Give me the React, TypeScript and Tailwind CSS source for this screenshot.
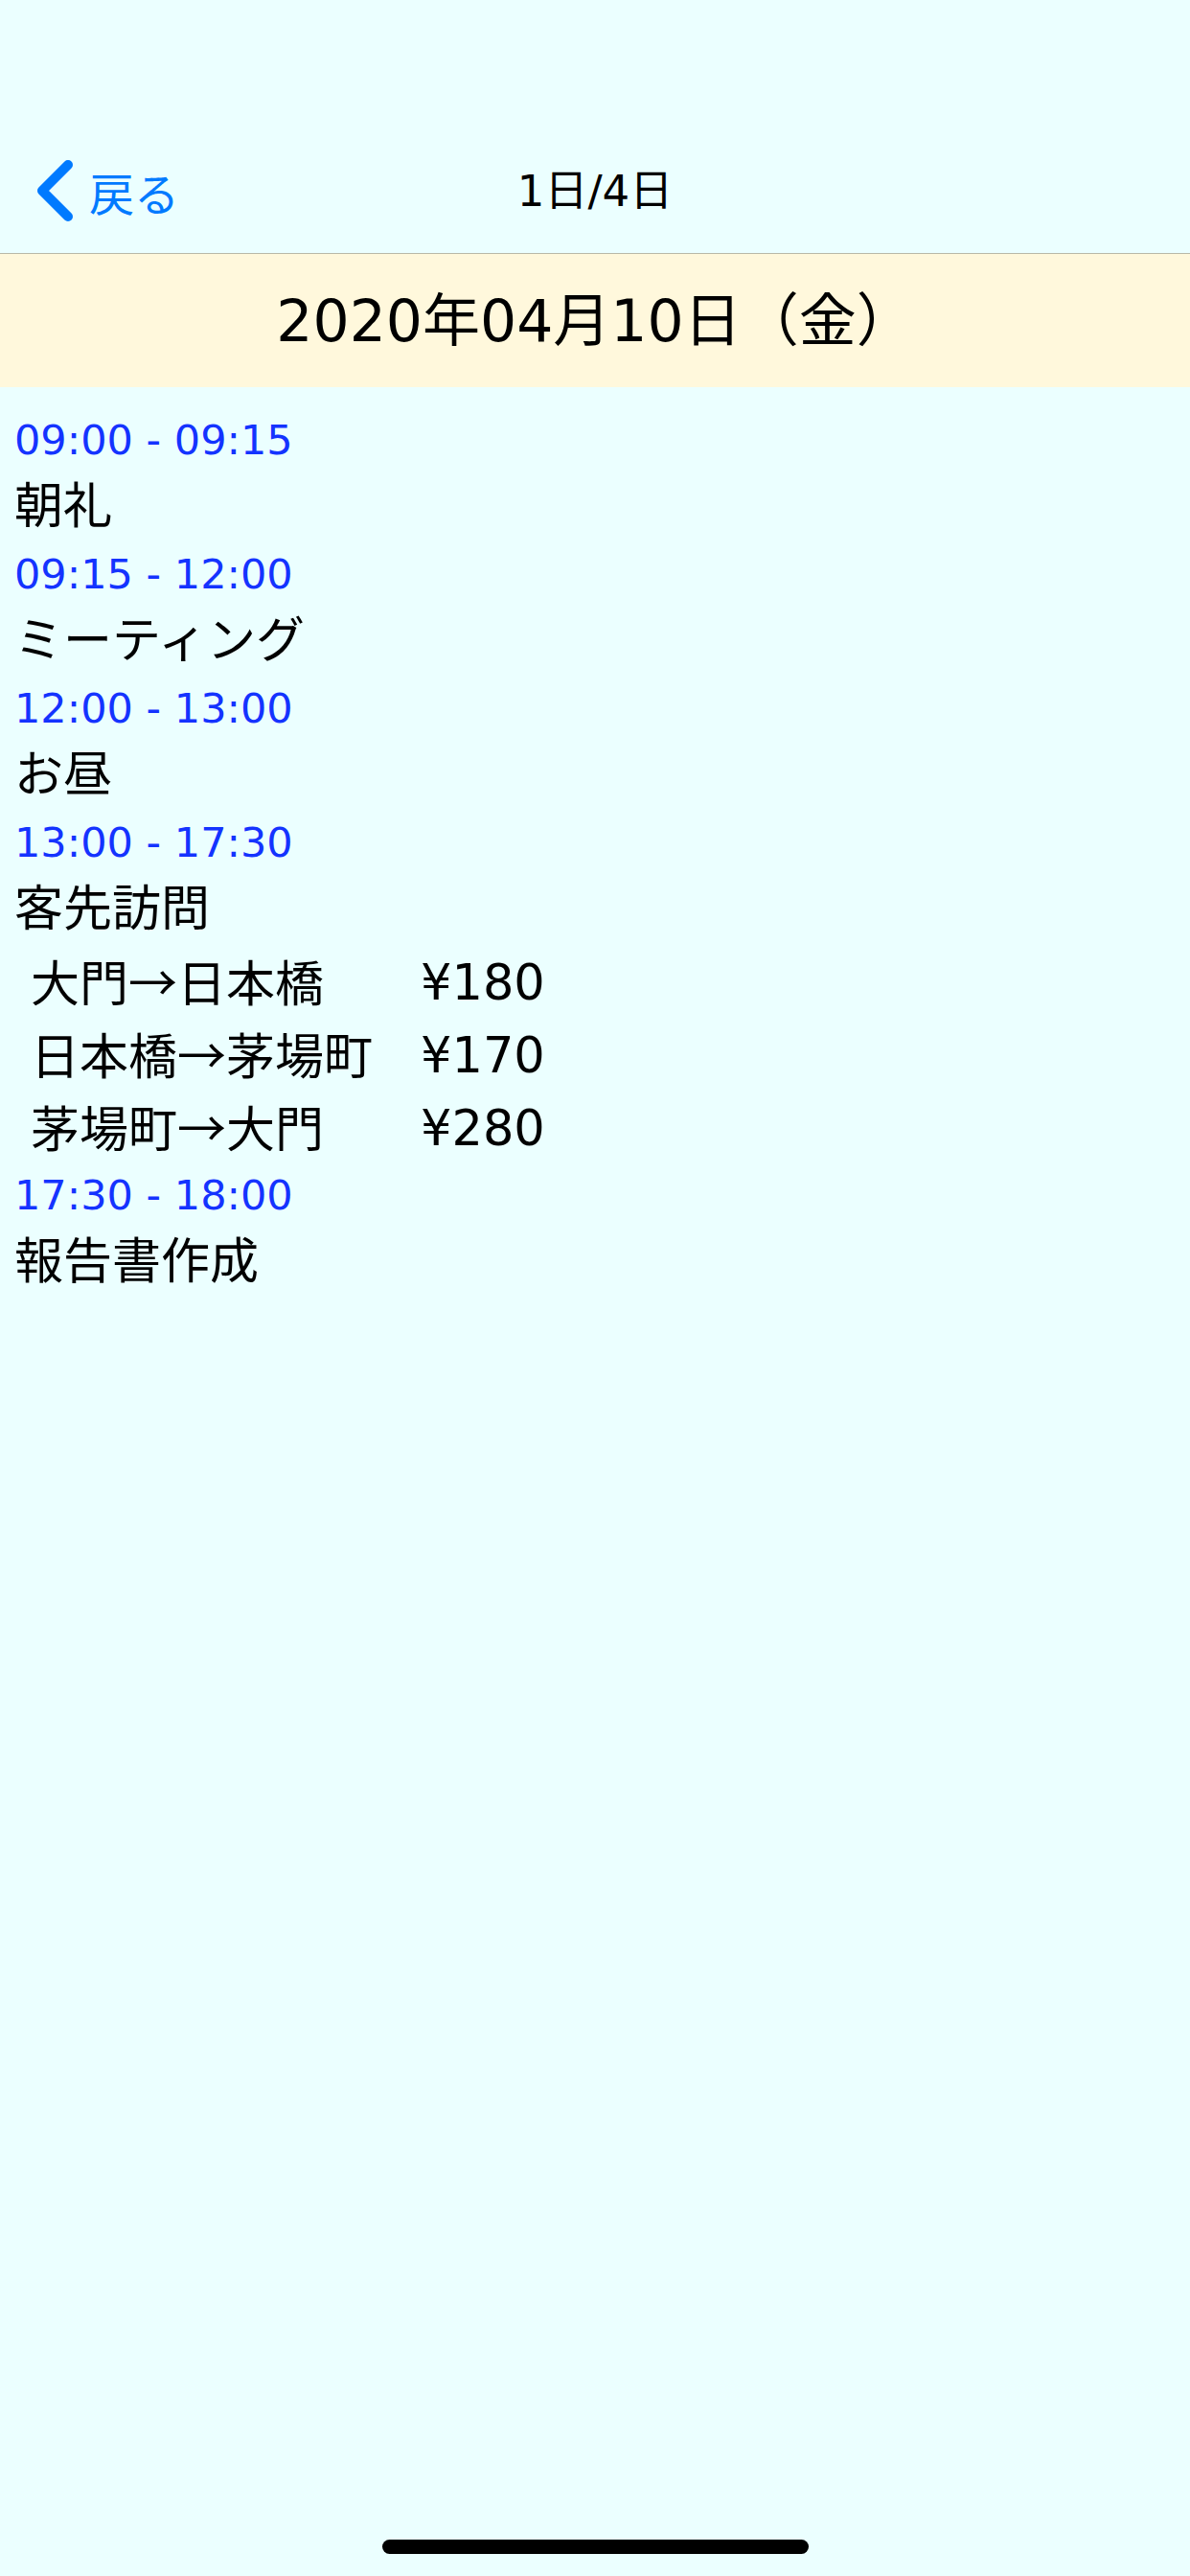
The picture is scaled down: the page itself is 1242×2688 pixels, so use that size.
const rows: { time: string; title: string; fares?: { route: [string, string]; price: string }[] }[] = [
  { time: "09:00 - 09:15", title: "朝礼" },
  { time: "09:15 - 12:00", title: "ミーティング" },
  { time: "12:00 - 13:00", title: "お昼" },
  {
    time: "13:00 - 17:30",
    title: "客先訪問",
    fares: [
      { route: ["大門", "日本橋"], price: "¥180" },
      { route: ["日本橋", "茅場町"], price: "¥170" },
      { route: ["茅場町", "大門"], price: "¥280" },
    ],
  },
  { time: "17:30 - 18:00", title: "報告書作成" },
];

const font = "font-['DejaVu_Sans','Noto_Sans_CJK_JP',sans-serif]";

export default function App() {
  return (
    <div className={`min-h-[2688px] bg-[#ebffff] flex flex-col ${font}`}>
      {/* Nav bar */}
      <header className="h-[264px] flex flex-col justify-end">
        <div className="h-[130px] grid grid-cols-3 items-center">
          <button type="button" className="flex items-center gap-[17px] pl-[38px] text-[#007aff]">
            <svg width="38" height="64" viewBox="0 0 38 64" fill="none">
              <path d="M33 5 L6 32 L33 59" stroke="#007aff" strokeWidth="10" strokeLinecap="round" strokeLinejoin="round" />
            </svg>
            <span className="text-[47px] leading-none font-['Noto_Sans_CJK_JP',sans-serif]">戻る</span>
          </button>
          <div className="text-center text-[45px] leading-none text-black">1日/4日</div>
          <div />
        </div>
      </header>

      {/* Date bar */}
      <div className="h-[140px] bg-[#fff8dc] border-t border-[#b8b8a8] flex items-center justify-center">
        <h1 className="text-[60px] leading-none text-black">2020年04月10日（金）</h1>
      </div>

      {/* Schedule */}
      <main className="px-[15px] pt-[21px] flex flex-col">
        {rows.map((r) => (
          <div key={r.time} className="flex flex-col">
            <div className="h-[68px] flex items-center text-[43px] text-[#1433ff]">{r.time}</div>
            <div className="h-[72px] flex items-center text-[51px] text-black">{r.title}</div>
            {r.fares?.map((f) => (
              <div key={f.price} className="h-[76px] grid grid-cols-[424px_auto] items-center text-[51px] text-black">
                <span className="pl-[17px]">
                  {f.route[0]}
                  <span className="font-['Noto_Sans_CJK_JP',sans-serif]">→</span>
                  {f.route[1]}
                </span>
                <span>{f.price}</span>
              </div>
            ))}
          </div>
        ))}
      </main>

      <div className="flex-1" />
      {/* Home indicator */}
      <div className="h-[38px] flex justify-center">
        <div className="w-[445px] h-[15px] rounded-full bg-black" />
      </div>
    </div>
  );
}
